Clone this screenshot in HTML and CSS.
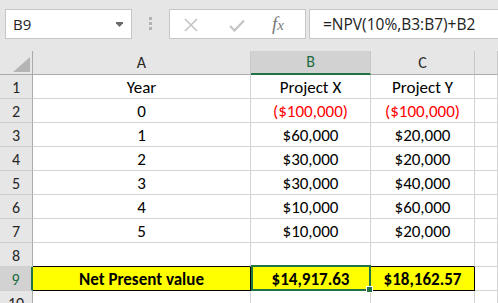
FILE: index.html
```html
<!DOCTYPE html>
<html lang="en">
<head>
    <meta charset="UTF-8">
    <title>NPV</title>
    <link rel="stylesheet" href="styles.css">
</head>
<body>
    <div class="fbar">
        <div class="namebox">
            <span>B9</span>
            <svg class="drop" width="7" height="5" viewBox="0 0 7 5"><path d="M0 0h7v1.2L3.5 5 0 1.2z" fill="#6b6b6b"/></svg>
        </div>
        <div class="dots"><i></i><i></i><i></i></div>
        <div class="btns">
            <svg class="ico-x" width="14" height="14" viewBox="0 0 14 14"><path d="M1 1L13 13M13 1L1 13" stroke="#c4c4c4" stroke-width="1.6" fill="none"/></svg>
            <svg class="ico-ok" width="16" height="13" viewBox="0 0 16 13"><path d="M1 7L5.5 11.5 15 1.5" stroke="#c4c4c4" stroke-width="2.2" fill="none"/></svg>
            <span class="fx">f<small>x</small></span>
        </div>
        <div class="formula">=NPV(10%,B3:B7)+B2</div>
    </div>
    <div class="sheet">
        <div class="corner"><svg width="17" height="15" viewBox="0 0 17 15"><path d="M17 0V15H0z" fill="#b5b5b5"/></svg></div>
        <div class="h">A</div>
        <div class="h on">B</div>
        <div class="h">C</div>
        <div class="h last"></div>

        <div class="r">1</div><div class="c">Year</div><div class="c">Project X</div><div class="c">Project Y</div><div class="c"></div>
        <div class="r">2</div><div class="c">0</div><div class="c red">($100,000)</div><div class="c red">($100,000)</div><div class="c"></div>
        <div class="r">3</div><div class="c">1</div><div class="c">$60,000</div><div class="c">$20,000</div><div class="c"></div>
        <div class="r">4</div><div class="c">2</div><div class="c">$30,000</div><div class="c">$20,000</div><div class="c"></div>
        <div class="r">5</div><div class="c">3</div><div class="c">$30,000</div><div class="c">$40,000</div><div class="c"></div>
        <div class="r">6</div><div class="c">4</div><div class="c">$10,000</div><div class="c">$60,000</div><div class="c"></div>
        <div class="r">7</div><div class="c">5</div><div class="c">$10,000</div><div class="c">$20,000</div><div class="c"></div>
        <div class="r">8</div><div class="c above"></div><div class="c above"></div><div class="c above"></div><div class="c"></div>
        <div class="r on">9</div>
        <div class="c npv">Net Present value</div>
        <div class="c npv mid">$14,917.63<div class="sel"><i></i></div></div>
        <div class="c npv">$18,162.57</div>
        <div class="c"></div>
        <div class="r">10</div><div class="c"></div><div class="c"></div><div class="c"></div><div class="c"></div>
    </div>
</body>
</html>
```

FILE: styles.css
```css
body{margin: 0; background-color: #e6e6e6; overflow: hidden; width: 498px; height: 303px;}

/* formula bar */
.fbar{display: flex; height: 51px; padding: 9px 0 0 5px; box-sizing: border-box; font-family: "Open Sans", "Noto Sans", sans-serif; font-size: 15px; color: #222;}
.namebox{width: 127px; height: 30px; box-sizing: border-box; border: 1px solid #c6c6c6; background-color: #fff; display: flex; align-items: center; justify-content: space-between; padding: 0 8px 0 7px;}
.namebox span{line-height: 28px;}
.dots{width: 3px; margin: 8px 17px 0 17px; display: flex; flex-direction: column; gap: 2px;}
.dots i{display: block; width: 3px; height: 3px; background-color: #b3b3b3;}
.btns{width: 137px; height: 30px; box-sizing: border-box; border: 1px solid #c6c6c6; background-color: #fff; display: flex; align-items: center; padding-left: 14px;}
.btns .ico-x{margin-top: 1px;}
.btns .ico-ok{margin-left: 31px; margin-top: 3px;}
.btns .fx{margin-left: 27px; font-family: "Liberation Serif", serif; font-style: italic; font-size: 19px; color: #7a7a7a; line-height: 28px;}
.btns .fx small{font-size: 15px;}
.formula{flex: 1; height: 30px; margin-left: 3px; box-sizing: border-box; border: 1px solid #c6c6c6; border-right: 0; background-color: #fff; padding-left: 13px; line-height: 28px; font-size: 15.5px;}

/* sheet */
.sheet{display: grid; grid-template-columns: 33px 218px 120px 104px 1fr; grid-auto-rows: 24px; background-color: #fff; font-family: Carlito, Lato, sans-serif; font-size: 17px; color: #000;}
.sheet > div{box-sizing: border-box; border-right: 1px solid #d4d4d4; border-bottom: 1px solid #d4d4d4; text-align: center; white-space: nowrap;}
.sheet .corner{background-color: #e6e6e6; border-right-color: #ababab; border-bottom-color: #ababab; padding: 6px 0 0 13px;}
.sheet .corner svg{display: block;}
.sheet .h{background-color: #e6e6e6; border-right-color: #c8c8c8; border-bottom-color: #ababab; line-height: 23px; color: #262626; font-size: 16px;}
.sheet .h.on{background-color: #d2d2d2; border-bottom: 2px solid #217346; color: #1c6b3e; line-height: 22px;}
.sheet .r{background-color: #e6e6e6; border-right-color: #ababab; border-bottom-color: #cfcfcf; line-height: 21px; padding-top: 2px; color: #262626; font-size: 16px;}
.sheet .r.on{background-color: #d2d2d2; border-right: 2px solid #217346; color: #1c6b3e;}
.sheet .c{line-height: 21px; padding-top: 2px;}
.sheet .red{color: #ff0000;}
.sheet .above{border-bottom-color: #000;}
.sheet .npv{background-color: #ffff00; font-weight: bold; border-bottom-color: #000; border-right-color: #000;}
.sheet .mid{position: relative;}
.sheet .sel{position: absolute; left: 0; top: -2px; width: 120px; height: 26px; box-sizing: border-box; border: 2px solid #217346;}
.sheet .sel i{position: absolute; right: -4px; bottom: -4px; width: 5px; height: 5px; background-color: #217346; border: 1px solid #fff;}
```
